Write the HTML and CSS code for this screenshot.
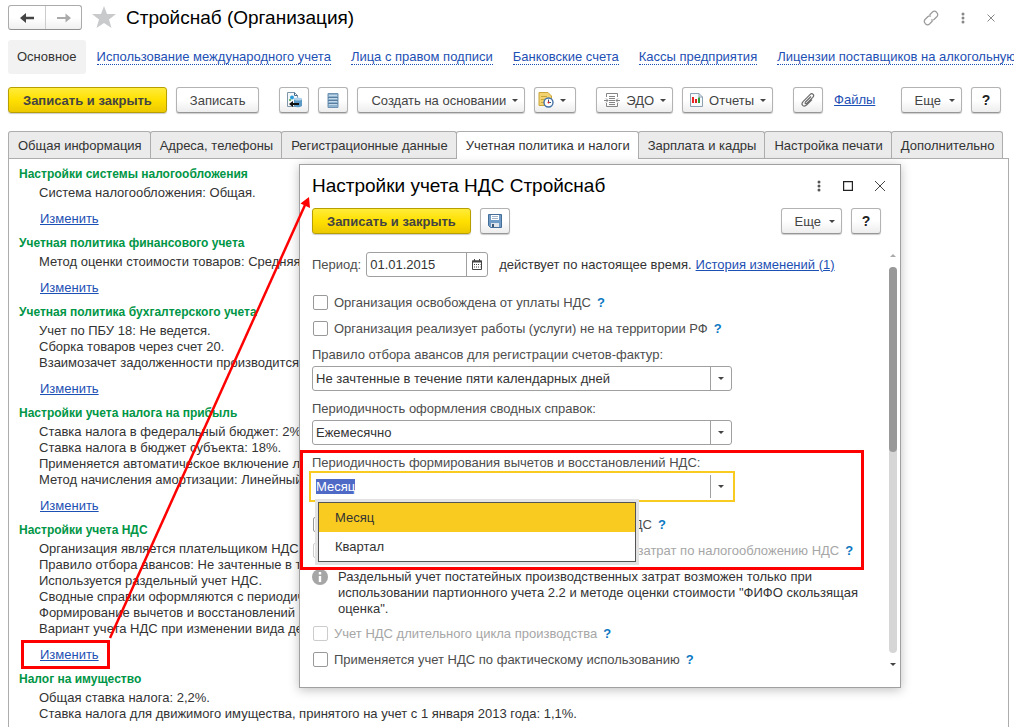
FILE: index.html
```html
<!DOCTYPE html>
<html lang="ru">
  <head>
    <meta charset="UTF-8" />
    <meta name="viewport" content="width=device-width, initial-scale=1.0" />
    <title>Стройснаб (Организация)</title>
    <link rel="stylesheet" href="styles.css">
  </head>
  <body>
    <header class="title-bar">
      <div class="history">
        <button type="button" aria-label="Назад">
          <svg width="16" height="12" viewBox="0 0 16 12"><path d="M1 6 L7 1 V4.800 H15 V7.200 H7 V11 Z" fill="#444"/></svg>
        </button>
        <button type="button" aria-label="Вперед">
          <svg width="16" height="12" viewBox="0 0 16 12"><path d="M15 6 L9.500 1.500 V5 H1 V7 H9.500 V10.500 Z" fill="#aaa"/></svg>
        </button>
      </div>
      <svg class="star" width="24" height="23" viewBox="0 0 24 23"><path d="M12 0 L15 8 H24 L17 13.500 L19.500 22 L12 17 L4.500 22 L7 13.500 L0 8 H9 Z" fill="#c9cacc"/></svg>
      <h1>Стройснаб (Организация)</h1>
      <div class="window-tools">
        <svg width="16" height="16" viewBox="0 0 16 16" fill="none" stroke="#999" stroke-width="1.200"><path d="M6.500 5 L9.500 2 Q11.500 0.300 13.600 2.300 Q15.700 4.400 14 6.500 L11 9.500 Q9.500 10.700 8 9.800"/><path d="M9.500 11 L6.500 14 Q4.500 15.700 2.400 13.700 Q0.300 11.600 2 9.500 L5 6.500 Q6.500 5.300 8 6.200"/></svg>
        <svg width="4" height="12" viewBox="0 0 4 12" fill="#888"><circle cx="2" cy="2" r="1.500"/><circle cx="2" cy="6" r="1.500"/><circle cx="2" cy="10" r="1.500"/></svg>
        <svg width="8" height="8" viewBox="0 0 8 8" stroke="#888"><path d="M0.500 0.500 L7.500 7.500 M7.500 0.500 L0.500 7.500"/></svg>
      </div>
    </header>

    <nav class="sections">
      <span class="current">Основное</span>
      <a href="#">Использование международного учета</a>
      <a href="#">Лица с правом подписи</a>
      <a href="#">Банковские счета</a>
      <a href="#">Кассы предприятия</a>
      <a href="#">Лицензии поставщиков на алкогольную продукцию</a>
    </nav>

    <div class="toolbar">
      <div class="group">
        <button type="button" class="btn primary">Записать и закрыть</button>
        <button type="button" class="btn">Записать</button>
      </div>
      <div class="group">
        <button type="button" class="btn icon" aria-label="Перейти">
          <svg width="18" height="18" viewBox="0 0 18 18"><path d="M2.500 1.500 H9.500 L12.500 4.500 V15.500 H2.500 Z" fill="#f4f8fb" stroke="#7f95a8"/><path d="M9.500 1.500 V4.500 H12.500" fill="none" stroke="#4a6c8c"/><circle cx="7" cy="6.500" r="2" fill="#2d9bd8"/><circle cx="5" cy="9" r="1" fill="#4dac3c"/><path d="M9 8 Q13 6 17 8 V15 Q13 17.500 9 15 Z" fill="#5b9ac6"/><ellipse cx="13" cy="8" rx="4" ry="1.500" fill="#b1d3eb"/><path d="M4 13 L8 10 V12 H14 V14 H8 V16 Z" fill="#111"/></svg>
        </button>
        <button type="button" class="btn icon" aria-label="Список">
          <svg width="12" height="15" viewBox="0 0 12 15"><path d="M1 0.500 H11 V14.500 H1 Z" fill="#8fb3cf" stroke="#6f93b3"/><path d="M2 2.500 H10 M2 5.500 H10 M2 8.500 H10 M2 11.500 H10" stroke="#c3d9e9"/><path d="M1 4.500 H11 M1 7.500 H11 M1 10.500 H11" stroke="#587d9e"/></svg>
        </button>
        <button type="button" class="btn menu">Создать на основании<i class="caret"></i></button>
        <button type="button" class="btn menu icon" aria-label="Напоминание">
          <svg width="16" height="16" viewBox="0 0 16 16"><path d="M1 0.500 H10 L13.500 4 V13.500 H1 Z" fill="#f2d36f" stroke="#c9a53c"/><path d="M3 4.500 H9 M3 7.500 H8 M3 10.500 H6" stroke="#c9a53c"/><circle cx="10.500" cy="10.500" r="4.500" fill="#fff" stroke="#4472a8" stroke-width="1.400"/><path d="M10.500 7.500 V10.500 H13" fill="none" stroke="#31557f"/><circle cx="10.500" cy="10.500" r="1" fill="#e22"/></svg>
          <i class="caret"></i>
        </button>
      </div>
      <div class="group">
        <button type="button" class="btn menu edo">
          <svg width="16" height="14" viewBox="0 0 16 14" fill="none" stroke="#858585"><path d="M2.500 4 V0.500 H13.500 V4 M2.500 10 V13.500 H13.500 V10 M5 3.500 H11 M5 5.500 H11 M5 7.500 H11 M5 9.500 H11 M5 11.500 H11"/><path d="M0 7.500 H4 M2 5.500 L4 7.500 L2 9.500 M12 7.500 H16 M14 5.500 L12 7.500 L14 9.500"/></svg>
          ЭДО<i class="caret"></i>
        </button>
        <button type="button" class="btn menu reports">
          <svg width="13" height="14" viewBox="0 0 13 14"><path d="M0.500 0.500 H9 L12.500 4 V13.500 H0.500 Z" fill="#f7fafc" stroke="#8ca0b3"/><path d="M9 0.500 V4 H12.500" fill="none" stroke="#8ca0b3"/><path d="M3 4 V10" stroke="#e22" stroke-width="2"/><path d="M6 6 V10" stroke="#d22" stroke-width="2"/><path d="M9 4.500 V10" stroke="#2b9b35" stroke-width="2"/></svg>
          Отчеты<i class="caret"></i>
        </button>
      </div>
      <div class="group">
        <button type="button" class="btn icon" aria-label="Прикрепить">
          <svg width="14" height="14" viewBox="0 0 14 14" fill="none" stroke="#6b6b6b" stroke-width="1.200"><path d="M10 3.500 L4.500 9 Q3.700 10 4.500 10.500 Q5.200 11 6 10.200 L11.800 4.400 Q13.500 2.500 12 1.200 Q10.700 0 9 1.600 L2.300 8.300 Q0 10.800 1.700 12.400 Q3.500 14 5.800 11.800 L11 6.600"/></svg>
        </button>
        <a href="#" class="files">Файлы</a>
      </div>
      <div class="right">
        <button type="button" class="btn menu">Еще<i class="caret"></i></button>
        <button type="button" class="btn icon help">?</button>
      </div>
    </div>

    <div class="tabs" role="tablist">
      <button type="button" role="tab">Общая информация</button>
      <button type="button" role="tab">Адреса, телефоны</button>
      <button type="button" role="tab">Регистрационные данные</button>
      <button type="button" role="tab" class="active" aria-selected="true">Учетная политика и налоги</button>
      <button type="button" role="tab">Зарплата и кадры</button>
      <button type="button" role="tab">Настройка печати</button>
      <button type="button" role="tab">Дополнительно</button>
    </div>

    <main class="panel">
      <section>
        <h2>Настройки системы налогообложения</h2>
        <p>Система налогообложения: Общая.</p>
        <a href="#">Изменить</a>
      </section>
      <section>
        <h2>Учетная политика финансового учета</h2>
        <p>Метод оценки стоимости товаров: Средняя</p>
        <a href="#">Изменить</a>
      </section>
      <section>
        <h2>Учетная политика бухгалтерского учета</h2>
        <p>Учет по ПБУ 18: Не ведется.</p>
        <p>Сборка товаров через счет 20.</p>
        <p>Взаимозачет задолженности производится</p>
        <a href="#">Изменить</a>
      </section>
      <section>
        <h2>Настройки учета налога на прибыль</h2>
        <p>Ставка налога в федеральный бюджет: 2%</p>
        <p>Ставка налога в бюджет субъекта: 18%.</p>
        <p>Применяется автоматическое включение лизинга</p>
        <p>Метод начисления амортизации: Линейный.</p>
        <a href="#">Изменить</a>
      </section>
      <section>
        <h2>Настройки учета НДС</h2>
        <p>Организация является плательщиком НДС.</p>
        <p>Правило отбора авансов: Не зачтенные в течение</p>
        <p>Используется раздельный учет НДС.</p>
        <p>Сводные справки оформляются с периодичностью</p>
        <p>Формирование вычетов и восстановлений НДС</p>
        <p>Вариант учета НДС при изменении вида деятельности</p>
        <a href="#">Изменить</a>
      </section>
      <section>
        <h2>Налог на имущество</h2>
        <p>Общая ставка налога: 2,2%.</p>
        <p>Ставка налога для движимого имущества, принятого на учет с 1 января 2013 года: 1,1%.</p>
      </section>
    </main>

    <div class="dialog" role="dialog" aria-labelledby="dialog-title">
      <div class="dialog-title">
        <h1 id="dialog-title">Настройки учета НДС Стройснаб</h1>
        <div class="window-tools">
          <svg width="4" height="12" viewBox="0 0 4 12" fill="#555"><circle cx="2" cy="2" r="1.500"/><circle cx="2" cy="6" r="1.500"/><circle cx="2" cy="10" r="1.500"/></svg>
          <svg width="10" height="10" viewBox="0 0 10 10" fill="none" stroke="#222" stroke-width="1.200"><path d="M0.600 0.600 H9.400 V9.400 H0.600 Z"/></svg>
          <svg width="10" height="10" viewBox="0 0 10 10" stroke="#444"><path d="M0 0 L10 10 M10 0 L0 10"/></svg>
        </div>
      </div>
      <div class="dialog-toolbar">
        <button type="button" class="btn primary">Записать и закрыть</button>
        <button type="button" class="btn icon" aria-label="Записать">
          <svg width="16" height="16" viewBox="0 0 16 16"><path d="M1.500 1.500 H14.500 V14.500 H3.500 L1.500 12.500 Z" fill="#6f9cc6" stroke="#456f99"/><path d="M4 2 H12 V7 H4 Z" fill="#fff"/><path d="M5 3.500 H11 M5 5.500 H11" stroke="#9fb4c8"/><path d="M4 10 H12 V14 H4 Z" fill="#dfe5ea"/><path d="M5 11 H7 V14 H5 Z" fill="#3b5876"/></svg>
        </button>
        <div class="right">
          <button type="button" class="btn menu">Еще<i class="caret"></i></button>
          <button type="button" class="btn icon help">?</button>
        </div>
      </div>

      <div class="dialog-body">
        <form class="form">
          <div class="period">
            <label for="period">Период:</label>
            <div class="field date">
              <input type="text" id="period" value="01.01.2015" />
              <button type="button" aria-label="Календарь">
                <svg width="10" height="11" viewBox="0 0 10 11"><path d="M0.500 2 H9.500 V10.500 H0.500 Z" fill="#fff" stroke="#444"/><path d="M0 2.500 H10" stroke="#444" stroke-width="2"/><path d="M2.500 0 V2 M7.500 0 V2" stroke="#444"/><path d="M2 5.500 H8.500 M2 8 H8.500" stroke="#444" stroke-dasharray="1 1"/></svg>
              </button>
            </div>
            <span class="until">действует по настоящее время.</span>
            <a href="#">История изменений (1)</a>
          </div>

          <div class="checks">
            <div class="check"><input type="checkbox" id="c1" /><label for="c1">Организация освобождена от уплаты НДС</label><a href="#" class="hint">?</a></div>
            <div class="check"><input type="checkbox" id="c2" /><label for="c2">Организация реализует работы (услуги) не на территории РФ</label><a href="#" class="hint">?</a></div>
          </div>

          <label class="caption" for="advances">Правило отбора авансов для регистрации счетов-фактур:</label>
          <div class="field">
            <select id="advances"><option>Не зачтенные в течение пяти календарных дней</option></select>
            <span class="drop"><i class="caret"></i></span>
          </div>

          <label class="caption" for="summary">Периодичность оформления сводных справок:</label>
          <div class="field">
            <select id="summary"><option>Ежемесячно</option></select>
            <span class="drop"><i class="caret"></i></span>
          </div>

          <label class="caption" for="deduction">Периодичность формирования вычетов и восстановлений НДС:</label>
          <div class="field focused">
            <input type="text" id="deduction" role="combobox" aria-expanded="true" aria-controls="deduction-list" value="Месяц" />
            <button type="button" class="drop" aria-label="Выбрать"><i class="caret"></i></button>
            <ul class="popup" id="deduction-list" role="listbox">
              <li role="option" class="selected" aria-selected="true">Месяц</li>
              <li role="option">Квартал</li>
            </ul>
          </div>

          <div class="checks">
            <div class="check"><input type="checkbox" id="c3" /><label for="c3">Раздельный учет товаров по налогообложению НДС</label><a href="#" class="hint">?</a></div>
            <div class="check"><input type="checkbox" id="c4" disabled /><label for="c4">Раздельный учет постатейных производственных затрат по налогообложению НДС</label><a href="#" class="hint">?</a></div>
          </div>

          <div class="note">
            <svg width="16" height="16" viewBox="0 0 16 16"><circle cx="8" cy="8" r="8" fill="#a6a6a6"/><path d="M8 3 V5.500 M8 7 V13" stroke="#fff" stroke-width="2.400"/></svg>
            <p>Раздельный учет постатейных производственных затрат возможен только при использовании партионного учета 2.2 и методе оценки стоимости "ФИФО скользящая оценка".</p>
          </div>

          <div class="check"><input type="checkbox" id="c5" disabled /><label for="c5">Учет НДС длительного цикла производства</label><a href="#" class="hint">?</a></div>
          <div class="check"><input type="checkbox" id="c6" /><label for="c6">Применяется учет НДС по фактическому использованию</label><a href="#" class="hint">?</a></div>
        </form>
        <div class="scrollbar">
          <i class="up"></i>
          <div class="track"><div class="thumb"></div></div>
          <i class="down"></i>
        </div>
      </div>
    </div>

    <!-- red callouts: changed link -> dialog, highlighted field -->
    <svg class="callouts" width="1014" height="727" viewBox="0 0 1014 727" fill="none" stroke="#f00" stroke-width="3">
      <path d="M22.500 641.500 H108.500 V667.500 H22.500 Z"/>
      <path d="M301.500 451.500 H862.500 V568.500 H301.500 Z"/>
      <path d="M110 638 L305 205" stroke-width="2.500"/>
      <path d="M309 197 L300.500 203.500 L310 208 Z" fill="#f00" stroke="none"/>
    </svg>

    <script>
      const deduction = document.getElementById("deduction");
      deduction.focus();
      deduction.select();
    </script>
  </body>
</html>
```
FILE: styles.css
```css
* {
  box-sizing: border-box;
}
body {
  display: flex;
  flex-direction: column;
  position: relative;
  height: 100vh;
  margin: 0;
  overflow: hidden;
  background: #fff;
  color: #333;
  font-family: "Liberation Sans", Arial, sans-serif;
  font-size: 13px;
  line-height: 16px;
}
h1,
h2,
p,
ul {
  margin: 0;
  padding: 0;
}
h1 {
  font-size: 19px;
  font-weight: normal;
  line-height: 24px;
  color: #000;
}
a {
  color: #1d50b4;
}
button,
input,
select {
  font-family: inherit;
  font-size: inherit;
  color: inherit;
}
svg {
  flex: none;
}

/* top of the window */
.title-bar {
  display: flex;
  flex: none;
  align-items: center;
  height: 35px;
  padding: 0 19px 0 8px;
}
.history {
  display: flex;
  height: 25px;
  border: 1px solid #ababab;
  border-bottom-color: #8f8f8f;
  border-radius: 3px;
  background: linear-gradient(#fff 50%, #f0f0f0);
}
.history button {
  display: flex;
  align-items: center;
  justify-content: center;
  width: 36px;
  padding: 0;
  border: none;
  background: none;
}
.history button + button {
  border-left: 1px solid #ccc;
}
.star {
  margin: 0 10px;
}
.window-tools {
  display: flex;
  align-items: center;
  gap: 22px;
  margin-left: auto;
}
.sections {
  display: flex;
  flex: none;
  align-items: center;
  gap: 20px;
  margin-top: 5px;
  padding-left: 8px;
  white-space: nowrap;
  overflow: hidden;
}
.sections .current {
  margin-right: -9px;
  padding: 9px;
  border-radius: 3px;
  background: #f2f2f2;
}
.sections a {
  line-height: 14px;
  text-decoration: none;
  border-bottom: 1px dotted #1d50b4;
}

/* buttons */
.toolbar {
  display: flex;
  flex: none;
  gap: 20px;
  margin-top: 13px;
  padding: 0 13px 0 8px;
}
.group,
.right {
  display: flex;
  align-items: center;
  gap: 9px;
}
.right {
  margin-left: auto;
}
.btn {
  display: flex;
  align-items: center;
  justify-content: center;
  height: 26px;
  padding: 0 13px;
  border: 1px solid #b3b3b3;
  border-bottom-color: #969696;
  border-radius: 3px;
  background: linear-gradient(#fff 50%, #ededed);
  box-shadow: 0 1px 1px #ccc;
  color: #444;
  white-space: nowrap;
}
.btn.primary {
  padding: 0 14px;
  border-color: #b79f00;
  background: linear-gradient(#ffec3a, #ffe000 50%, #ecc900);
  font-weight: bold;
}
.btn.icon {
  width: 30px;
  padding: 0;
}
.btn.menu {
  gap: 6px;
  padding-right: 6px;
}
.btn.menu.icon {
  width: 42px;
}
.right .btn.menu {
  gap: 8px;
}
.btn.edo,
.btn.reports {
  padding-left: 7px;
}
.btn.help {
  font-size: 14px;
  font-weight: bold;
  color: #222;
}
.caret {
  border: 3px solid transparent;
  border-top-color: #444;
  border-bottom: none;
}
.files {
  margin-left: 2px;
}

/* tabs */
.tabs {
  display: flex;
  flex: none;
  margin: 18px 9px 0 8px;
}
.tabs button {
  height: 27px;
  margin-right: -1px;
  padding: 0 8px 0 9px;
  border: 1px solid #adadad;
  border-bottom: none;
  border-radius: 3px 3px 0 0;
  background: #ebebeb;
  white-space: nowrap;
}
.tabs .active {
  position: relative;
  height: 28px;
  margin-bottom: -1px;
  background: #fff;
}
.panel {
  flex: 1;
  min-height: 0;
  margin: 0 5px 0 8px;
  padding: 7px 10px 0;
  border: 1px solid #adadad;
  border-bottom: none;
  overflow: hidden;
}
.panel section {
  margin-bottom: 8px;
}
.panel h2 {
  margin-bottom: 3px;
  color: #009646;
  font-size: 12px;
  line-height: 16px;
}
.panel p {
  margin-left: 20px;
  white-space: nowrap;
}
.panel section a {
  display: inline-block;
  margin: 10px 0 0 21px;
}

/* dialog */
.dialog {
  position: absolute;
  left: 299px;
  top: 164px;
  width: 602px;
  padding: 9px 3px 15px 12px;
  border: 1px solid #a0a0a0;
  background: #fff;
  box-shadow: 0 2px 10px rgba(0, 0, 0, 0.25);
  color: #4d4d4d;
}
.dialog-title {
  display: flex;
  padding-right: 12px;
}
.dialog-toolbar {
  display: flex;
  gap: 9px;
  margin-top: 10px;
  padding-right: 16px;
}
.dialog-body {
  display: flex;
  margin-top: 18px;
}
.form {
  flex: 1;
}
.period {
  display: flex;
  align-items: center;
}
.period label {
  margin-right: 5px;
}
.until {
  margin: 0 4px 0 11px;
  color: #333;
}
.field {
  display: flex;
  position: relative;
  width: 420px;
  height: 25px;
  border: 1px solid #a0a0a0;
  border-radius: 3px;
  background: #fff;
}
.field.date {
  width: 122px;
}
.field input,
.field select {
  flex: 1;
  min-width: 0;
  padding: 0 3px;
  border: none;
  outline: none;
  appearance: none;
  background: none;
  color: #333;
}
.field button,
.field .drop {
  display: flex;
  align-items: center;
  justify-content: center;
  width: 21px;
  padding: 0;
  border: none;
  border-left: 1px solid #a0a0a0;
  background: none;
}
.field.focused {
  border-color: transparent;
  border-radius: 0;
  outline: 2px solid #f9cb20;
  outline-offset: 1px;
}
.field ::selection {
  background: #4f69c6;
  color: #fff;
}
.caption {
  display: block;
  margin: 10px 0 3px;
}
.checks {
  margin-top: 12px;
}
.checks + .caption {
  margin-top: 6px;
}
.check {
  display: flex;
  align-items: center;
  height: 26px;
  white-space: nowrap;
}
.check label,
.check .hint {
  padding-top: 2px;
}
.check input {
  appearance: none;
  width: 15px;
  height: 15px;
  margin: 0 6px 0 1px;
  border: 1px solid #999;
  border-radius: 2px;
  background: #fff;
}
.check input:disabled {
  border-color: #ccc;
}
.check input:disabled + label {
  color: #a6a6a6;
}
.hint {
  margin-left: 6px;
  color: #0c78c2;
  font-weight: bold;
  text-decoration: none;
}
.note {
  display: flex;
  gap: 10px;
  width: 556px;
  margin: 6px 0 3px;
  color: #333;
}
.popup {
  position: absolute;
  left: 5px;
  top: 27px;
  z-index: 1;
  width: 318px;
  border: 1px solid #555;
  box-shadow: 0 0 0 3px #e3e3e3;
  background: #fff;
  color: #333;
  list-style: none;
}
.popup li {
  padding: 7px 16px 6px;
}
.popup .selected {
  background: #f9cb20;
}
.scrollbar {
  display: flex;
  flex-direction: column;
  align-items: center;
  width: 8px;
}
.scrollbar .up {
  margin: 2px 0 10px;
  border: 3px solid transparent;
  border-top: none;
  border-bottom-color: #aaa;
}
.scrollbar .down {
  margin: 10px 0 6px;
  border: 3px solid transparent;
  border-bottom: none;
  border-top-color: #444;
}
.track {
  flex: 1;
  width: 8px;
  border-radius: 4px;
  background: #d6d6d6;
}
.thumb {
  height: 48%;
  border-radius: 4px;
  background: #999;
}

.callouts {
  position: absolute;
  left: 0;
  top: 0;
  z-index: 2;
  pointer-events: none;
}
```
